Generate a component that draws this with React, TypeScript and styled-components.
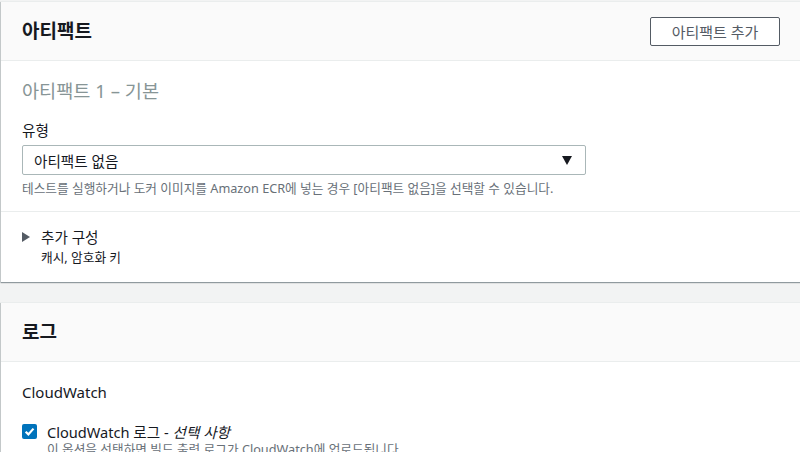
import React from "react";
import styled, { createGlobalStyle } from "styled-components";

const Global = createGlobalStyle`
  html, body { margin: 0; padding: 0; background: #f2f3f3; overflow: hidden; }
  body { font-family: "Noto Sans", "Noto Sans CJK KR", sans-serif; color: #16191f; }
  * { box-sizing: border-box; }
`;

const Page = styled.div`
  display: flex;
  flex-direction: column;
  gap: 20px;
  padding: 1px 0 0 1px;
  width: 820px;
`;

const Card = styled.section<{ $h: number }>`
  height: ${(p) => p.$h}px;
  background: #fff;
  box-shadow: 0 1px 1px 0 rgba(0, 28, 36, 0.3), -1px 1px 1px 0 rgba(0, 28, 36, 0.15);
  border-top: 1px solid #eaeded;
`;

const CardHeader = styled.header`
  height: 59px;
  background: #fafafa;
  border-bottom: 1px solid #eaeded;
  display: flex;
  align-items: center;
  justify-content: space-between;
  padding: 0 40px 0 21px;
`;

const Title = styled.h2`
  margin: 0;
  font-size: 19px;
  font-weight: 700;
  line-height: 22px;
`;

const OutlineButton = styled.button`
  width: 130px;
  height: 29px;
  border: 1px solid #545b64;
  border-radius: 2px;
  background: #fff;
  color: #545b64;
  font-family: inherit;
  font-size: 15px;
  line-height: 18px;
  padding: 0;
  margin-top: 1px;
`;

const Body = styled.div<{ $pt: number }>`
  padding: ${(p) => p.$pt}px 20px 0 21px;
`;

const SubTitle = styled.div`
  font-size: 18.6px;
  line-height: 22px;
  color: #879596;
  font-weight: 400;
`;

const Field = styled.div`
  margin-top: 18px;
  width: 564px;
  display: flex;
  flex-direction: column;
`;

const Label = styled.div`
  font-size: 14.6px;
  line-height: 20px;
`;

const Select = styled.div`
  margin-top: 5px;
  height: 30px;
  border: 1px solid #aab7b8;
  border-radius: 2px;
  display: flex;
  align-items: center;
  justify-content: space-between;
  padding: 0 13px 0 11px;
  font-size: 14.6px;
`;

const Help = styled.div`
  font-size: 12.7px;
  line-height: 16px;
  color: #687078;
  margin-top: 5px;
`;

const Divider = styled.div`
  border-top: 1px solid #eaeded;
  margin-top: 15px;
`;

const Expander = styled.div`
  padding: 15px 20px 0 21px;
  height: 69px;
  display: flex;
  gap: 11px;
`;

const ExpText = styled.div`
  display: flex;
  flex-direction: column;
`;

const ExpTitle = styled.div`
  font-size: 14.6px;
  line-height: 20px;
  font-weight: 400;
`;

const ExpSub = styled.div`
  font-size: 12.7px;
  line-height: 16px;
  margin-top: 2px;
  color: #16191f;
`;

const Caret = styled.span`
  width: 0;
  height: 0;
  border-top: 5px solid transparent;
  border-bottom: 5px solid transparent;
  border-left: 8px solid #545b64;
  margin-top: 5px;
`;

const DownTri = styled.span`
  width: 0;
  height: 0;
  border-left: 5.5px solid transparent;
  border-right: 5.5px solid transparent;
  border-top: 9px solid #16191f;
`;

const SectionLabel = styled.div`
  font-size: 15px;
  line-height: 22px;
`;

const CheckRow = styled.div`
  margin-top: 21px;
  display: flex;
  gap: 10px;
`;

const Check = styled.span`
  width: 15px;
  height: 15px;
  border-radius: 2px;
  background: #0073bb;
  display: flex;
  align-items: center;
  justify-content: center;
  flex-shrink: 0;
`;

const CheckText = styled.div`
  display: flex;
  flex-direction: column;
`;

const CheckLabel = styled.div`
  font-size: 14.6px;
  line-height: 17px;
  em { font-style: italic; }
`;

const CheckDesc = styled.div`
  font-size: 12.7px;
  line-height: 16px;
  color: #687078;
`;

export default function App() {
  return (
    <>
      <Global />
      <Page>
        <Card $h={281}>
          <CardHeader>
            <Title>아티팩트</Title>
            <OutlineButton>아티팩트 추가</OutlineButton>
          </CardHeader>
          <Body $pt={19}>
            <SubTitle>아티팩트 1 – 기본</SubTitle>
            <Field>
              <Label>유형</Label>
              <Select>
                <span>아티팩트 없음</span>
                <DownTri />
              </Select>
              <Help>
                테스트를 실행하거나 도커 이미지를 Amazon ECR에 넣는 경우 [아티팩트 없음]을 선택할 수 있습니다.
              </Help>
            </Field>
          </Body>
          <Divider />
          <Expander>
            <Caret />
            <ExpText>
              <ExpTitle>추가 구성</ExpTitle>
              <ExpSub>캐시, 암호화 키</ExpSub>
            </ExpText>
          </Expander>
        </Card>
        <Card $h={200}>
          <CardHeader>
            <Title>로그</Title>
          </CardHeader>
          <Body $pt={19}>
            <SectionLabel>CloudWatch</SectionLabel>
            <CheckRow>
              <Check>
                <svg width="11" height="11" viewBox="0 0 10 10">
                  <path d="M1.5 5.2 L4 7.6 L8.6 2.4" stroke="#fff" strokeWidth="2" fill="none" />
                </svg>
              </Check>
              <CheckText>
                <CheckLabel>
                  CloudWatch 로그 - <em>선택 사항</em>
                </CheckLabel>
                <CheckDesc>이 옵션을 선택하면 빌드 출력 로그가 CloudWatch에 업로드됩니다.</CheckDesc>
              </CheckText>
            </CheckRow>
          </Body>
        </Card>
      </Page>
    </>
  );
}
